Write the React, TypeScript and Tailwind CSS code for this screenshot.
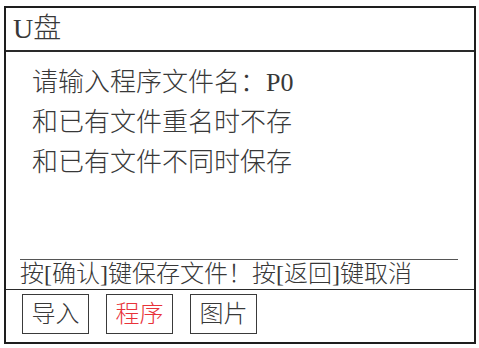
const font = { fontFamily: '"Liberation Serif", "Noto Sans CJK SC", serif' };

const lines = ['请输入程序文件名：P0', '和已有文件重名时不存', '和已有文件不同时保存'];

const tabs = [
  { label: '导入', active: false },
  { label: '程序', active: true },
  { label: '图片', active: false },
];

export default function App() {
  return (
    <div className="h-[348px] w-[479px] bg-white pl-[4px] pt-[6px] font-light text-[#383838]" style={font}>
      <div className="flex h-[338px] w-[472px] flex-col border-2 border-[#1e1e1e]">
        <div className="flex h-[44px] items-center border-b-2 border-[#2a2a2a] pl-[7px] text-[28px] leading-none">
          U盘
        </div>

        <div className="flex flex-1 flex-col pt-[11px]">
          <div className="pl-[26px] text-[26px] leading-[40px]">
            {lines.map(line => (
              <div key={line}>{line}</div>
            ))}
          </div>
          <div className="mt-auto ml-[14px] mr-[16px] border-t border-[#555] text-[24px] leading-[29px]">
            按[确认]键保存文件！按[返回]键取消
          </div>
        </div>

        <div className="flex h-[53px] gap-[17px] border-t border-[#2a2a2a] pl-[16px] pt-[4px]">
          {tabs.map(tab => (
            <div
              key={tab.label}
              className={`flex h-[40px] w-[67px] items-center justify-center border border-[#3a3a3a] text-[24px] ${
                tab.active ? 'text-[#e8333a]' : ''
              }`}
            >
              {tab.label}
            </div>
          ))}
        </div>
      </div>
    </div>
  );
}
